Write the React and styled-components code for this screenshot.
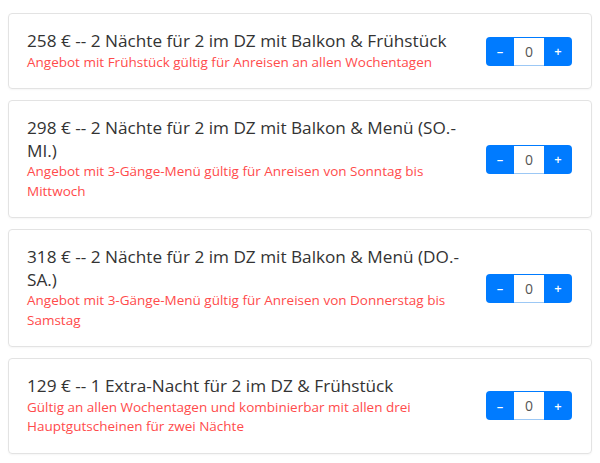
import styled, { createGlobalStyle } from "styled-components";

const GlobalStyle = createGlobalStyle`
  body {
    margin: 0;
    background: #fff;
    font-family: "Open Sans", "Liberation Sans", sans-serif;
  }
`;

const List = styled.div`
  display: flex;
  flex-direction: column;
  gap: 11px;
  padding: 13px 8px 8px;
`;

const Card = styled.div`
  display: flex;
  align-items: center;
  gap: 22px;
  padding: 16px 19px 16px 18px;
  border: 1px solid #e3e3e3;
  border-radius: 4px;
  box-shadow: 0 1px 2px rgba(0, 0, 0, 0.04);
`;

const Info = styled.div`
  flex: 1;
`;

const Title = styled.div`
  font-size: 17.2px;
  line-height: 22.5px;
  color: #333;
`;

const Note = styled.div`
  font-size: 13.5px;
  line-height: 19.5px;
  color: #ff4b4b;
`;

const Stepper = styled.div`
  display: flex;
  height: 29px;
  flex-shrink: 0;
`;

const StepBtn = styled.button`
  width: 28px;
  border: none;
  background: #007bff;
  color: #fff;
  font-family: inherit;
  font-size: 13px;
  font-weight: 600;
  padding: 0;
  cursor: pointer;
  border-radius: ${(p) => (p.$side === "left" ? "4px 0 0 4px" : "0 4px 4px 0")};
`;

const Count = styled.input`
  width: 30px;
  box-sizing: border-box;
  border: none;
  border-top: 1px solid #007bff;
  border-bottom: 1px solid #9cc8f5;
  text-align: center;
  font-family: inherit;
  font-size: 14px;
  color: #555;
  padding: 0;
  outline: none;
`;

const offers = [
  {
    title: "258 € -- 2 Nächte für 2 im DZ mit Balkon & Frühstück",
    note: "Angebot mit Frühstück gültig für Anreisen an allen Wochentagen",
  },
  {
    title: "298 € -- 2 Nächte für 2 im DZ mit Balkon & Menü (SO.-MI.)",
    note: "Angebot mit 3-Gänge-Menü gültig für Anreisen von Sonntag bis Mittwoch",
  },
  {
    title: "318 € -- 2 Nächte für 2 im DZ mit Balkon & Menü (DO.-SA.)",
    note: "Angebot mit 3-Gänge-Menü gültig für Anreisen von Donnerstag bis Samstag",
  },
  {
    title: "129 € -- 1 Extra-Nacht für 2 im DZ & Frühstück",
    note: "Gültig an allen Wochentagen und kombinierbar mit allen drei Hauptgutscheinen für zwei Nächte",
  },
];

const App = () => {
  return (
    <>
      <GlobalStyle />
      <List>
        {offers.map((o) => (
          <Card key={o.title}>
            <Info>
              <Title>{o.title}</Title>
              <Note>{o.note}</Note>
            </Info>
            <Stepper>
              <StepBtn $side="left">–</StepBtn>
              <Count type="text" defaultValue="0" readOnly />
              <StepBtn $side="right">+</StepBtn>
            </Stepper>
          </Card>
        ))}
      </List>
    </>
  );
};

export default App;
